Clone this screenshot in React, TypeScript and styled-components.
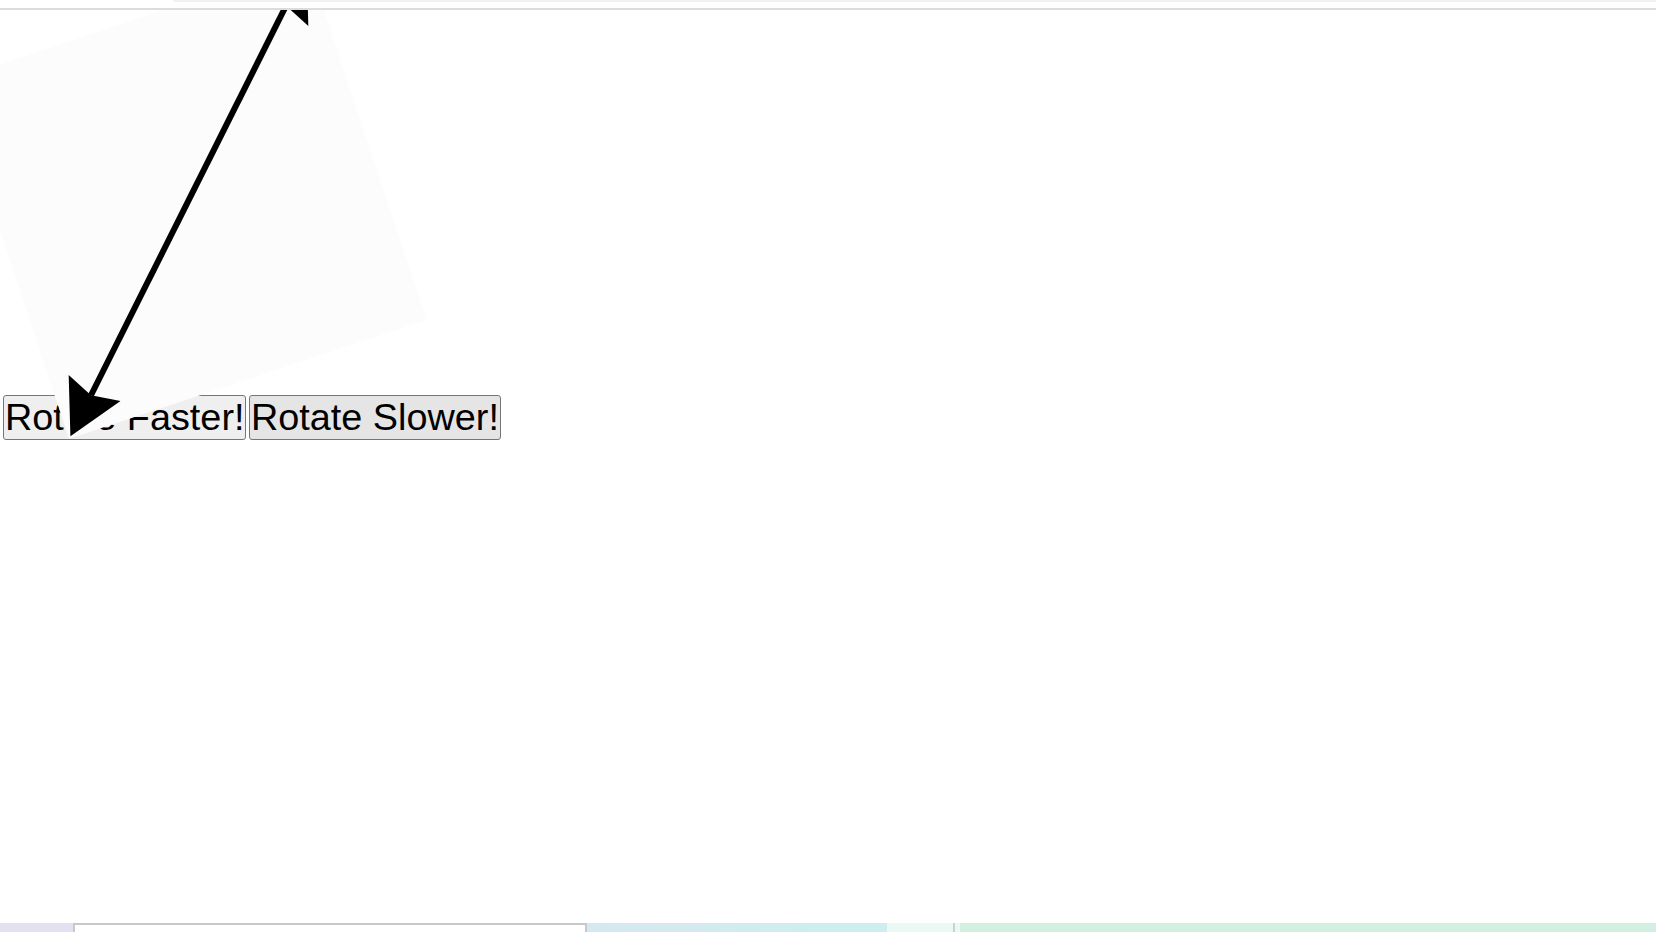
import React from "react";
import styled, { createGlobalStyle } from "styled-components";

const GlobalStyle = createGlobalStyle`
  html, body {
    margin: 0;
    padding: 0;
    background: #ffffff;
    overflow: hidden;
  }
  #root {
    width: 1656px;
    height: 932px;
  }
`;

const Page = styled.div`
  width: 1656px;
  height: 932px;
  display: flex;
  flex-direction: column;
  background: #ffffff;
  font-family: "Liberation Sans", Arial, sans-serif;
`;

const TopChrome = styled.div`
  height: 8px;
  flex: none;
  display: flex;
  border-bottom: 2px solid #dcdcdc;
  background: #ffffff;
`;

const ChromeGap = styled.div`
  width: 173px;
  flex: none;
`;

const ChromeTab = styled.div`
  flex: 1;
  height: 2px;
  background: #f1f1f1;
  border-bottom-left-radius: 4px;
`;

const Content = styled.div`
  flex: 1;
  overflow: hidden;
  display: flex;
  flex-direction: column;
`;

const Stage = styled.div`
  height: 385px;
  flex: none;
`;

const Board = styled.div`
  position: relative;
  z-index: 1;
  width: 377px;
  height: 377px;
  margin-top: 2px;
  background: #fcfcfc;
  transform: rotate(-18.4deg);
  transform-origin: 50% 50%;
`;

const ButtonRow = styled.div`
  display: flex;
  gap: 2.5px;
  margin-left: 3px;
`;

const SpinButton = styled.button<{ $hover?: boolean }>`
  font-family: "Liberation Sans", Arial, sans-serif;
  font-size: 37.8px;
  line-height: 43px;
  color: #000000;
  padding: 0 1px;
  border: 1px solid #767676;
  border-radius: 3px;
  background: ${(p) => (p.$hover ? "#e5e5e5" : "#efefef")};
  cursor: pointer;
`;

const Taskbar = styled.div`
  height: 9px;
  flex: none;
  display: flex;
`;

const TaskSeg = styled.div<{ $w?: number; $bg: string }>`
  ${(p) => (p.$w ? `width: ${p.$w}px; flex: none;` : "flex: 1;")}
  background: ${(p) => p.$bg};
`;

const TaskWindow = styled.div`
  width: 510px;
  flex: none;
  background: #ffffff;
  border-top: 2px solid #c8c8c8;
  border-left: 2px solid #c8c8c8;
  border-right: 2px solid #c8c8c8;
`;

const TaskDivider = styled.div`
  width: 2px;
  flex: none;
  background: #bcd8d4;
`;

function Arrow() {
  return (
    <svg width="377" height="377" viewBox="0 0 377 377">
      <line x1="34.5" y1="342.5" x2="342.5" y2="34.5" stroke="#000" strokeWidth="6" />
      <polygon points="2,375 19.7,316.3 34.5,342.5 60.7,357.3" fill="#000" />
      <polygon points="375,2 357.3,60.7 342.5,34.5 316.3,19.7" fill="#000" />
    </svg>
  );
}

export default function App() {
  return (
    <>
      <GlobalStyle />
      <Page>
        <TopChrome>
          <ChromeGap />
          <ChromeTab />
        </TopChrome>
        <Content>
          <Stage>
            <Board>
              <Arrow />
            </Board>
          </Stage>
          <ButtonRow>
            <SpinButton>Rotate Faster!</SpinButton>
            <SpinButton $hover>Rotate Slower!</SpinButton>
          </ButtonRow>
        </Content>
        <Taskbar>
          <TaskSeg $w={73} $bg="#e3e1ef" />
          <TaskWindow />
          <TaskSeg $w={300} $bg="linear-gradient(90deg, #d6e8f0, #ccefee)" />
          <TaskSeg $w={66} $bg="#eaf8f6" />
          <TaskDivider />
          <TaskSeg $w={5} $bg="#eaf8f6" />
          <TaskSeg $bg="#d2efe2" />
        </Taskbar>
      </Page>
    </>
  );
}
